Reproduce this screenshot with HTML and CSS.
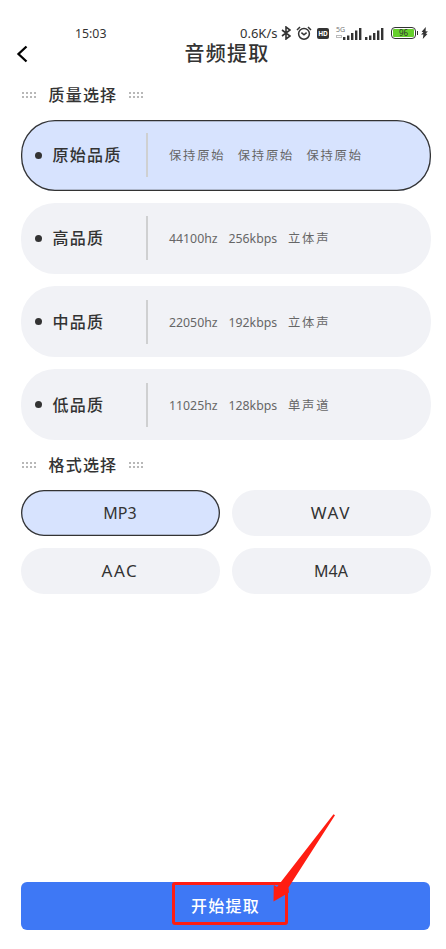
FILE: index.html
```
<!DOCTYPE html>
<html lang="zh-CN">
<head>
    <meta charset="UTF-8">
    <meta name="viewport" content="width=device-width, initial-scale=1.0">
    <title>音频提取</title>
    <link rel="stylesheet" href="styles.css">
</head>
<body>

    <div class="status-bar">
        <span class="time">15:03</span>
        <div class="status-right">
            <span class="speed">0.6K/s</span>
            <svg class="bluetooth" width="10" height="14" viewBox="0 0 10 14" fill="none" stroke="#333" stroke-width="1.6">
                <path d="M1 4 L9 10 L5 13 V1 L9 4 L1 10"/>
            </svg>
            <svg class="alarm" width="16" height="15" viewBox="0 0 16 15" fill="none" stroke="#333" stroke-width="1.5">
                <circle cx="8" cy="7.8" r="5.4"/>
                <path d="M1 4 L4 1 M15 4 L12 1 M5.4 6.6 L8 8.8 L10.6 6.6"/>
            </svg>
            <span class="hd">HD</span>
            <span class="network"><b>5G</b><i></i></span>
            <svg class="signal" width="19" height="13" viewBox="0 0 19 13" fill="#333">
                <path d="M0 10h2.4v3H0z M4 8.5h2.4V13H4z M8 6h2.4v7H8z M12 3.5h2.4V13H12z M16 1h2.4v12H16z"/>
            </svg>
            <svg class="signal second" width="19" height="13" viewBox="0 0 19 13" fill="#333">
                <path d="M0 10h2.4v3H0z M4 8.5h2.4V13H4z M8 6h2.4v7H8z M12 3.5h2.4V13H12z M16 1h2.4v12H16z"/>
            </svg>
            <span class="battery"><span class="level">96</span></span>
            <svg class="charge" width="7" height="12" viewBox="0 0 7 12" fill="#333">
                <path d="M4.8 0 L0.6 4.8 L2.4 5.2 L0 7.4 L2.4 7.6 L1.8 12 L6.4 7 L4.6 6.6 L7 4.4 L4.6 4.2z"/>
            </svg>
        </div>
    </div>

    <div class="header">
        <svg class="back" width="12" height="18" viewBox="0 0 12 18" fill="none" stroke="#000" stroke-width="2.3">
            <path d="M10.5 1.5 L2.5 9 L10.5 16.5"/>
        </svg>
        <h1>音频提取</h1>
    </div>

    <div class="content">
        <div class="section-title">
            <span class="dots"></span>
            <h2>质量选择</h2>
            <span class="dots"></span>
        </div>

        <div class="quality-list">
            <div class="quality active">
                <span class="name">原始品质</span>
                <div class="specs"><span class="cn">保持原始</span><span class="cn">保持原始</span><span class="cn">保持原始</span></div>
            </div>
            <div class="quality">
                <span class="name">高品质</span>
                <div class="specs"><span>44100hz</span><span>256kbps</span><span class="cn">立体声</span></div>
            </div>
            <div class="quality">
                <span class="name">中品质</span>
                <div class="specs"><span>22050hz</span><span>192kbps</span><span class="cn">立体声</span></div>
            </div>
            <div class="quality">
                <span class="name">低品质</span>
                <div class="specs"><span>11025hz</span><span>128kbps</span><span class="cn">单声道</span></div>
            </div>
        </div>

        <div class="section-title format-title">
            <span class="dots"></span>
            <h2>格式选择</h2>
            <span class="dots"></span>
        </div>

        <div class="format-list">
            <div class="format active">MP3</div>
            <div class="format wide">WAV</div>
            <div class="format wide">AAC</div>
            <div class="format">M4A</div>
        </div>
    </div>

    <div class="footer">
        <div class="start-btn">开始提取</div>
        <div class="highlight"></div>
        <svg class="arrow" width="64" height="90" viewBox="0 0 64 90" fill="#ff1d12">
            <path d="M62.5 1.2 L64 2.2 L17.5 74.5 L18 79.5 L2.5 88.5 L2.8 72 L6 74 Z"/>
        </svg>
    </div>

</body>
</html>
```

FILE: styles.css
```
* {
    margin: 0;
    padding: 0;
    box-sizing: border-box;
}

body {
    height: 949px;
    display: flex;
    flex-direction: column;
    background-color: #fff;
    color: #333;
    font-family: "Noto Sans", "Noto Sans CJK SC", sans-serif;
    overflow: hidden;
}

/* status bar */
.status-bar {
    height: 43px;
    padding: 23px 18px 0 75px;
    display: flex;
    justify-content: space-between;
    line-height: 20px;
    font-size: 13px;
}

.time {
    font-size: 12.3px;
    line-height: 21px;
}

.status-right {
    display: flex;
    align-items: center;
    height: 20px;
}

.speed {
    width: 40px;
    font-size: 13px;
    white-space: nowrap;
}

.bluetooth {
    margin-left: 1px;
}

.alarm {
    margin-left: 5px;
}

.hd {
    width: 12px;
    height: 11px;
    margin-left: 5px;
    border-radius: 2px;
    background-color: #333;
    color: #fff;
    font-size: 6.5px;
    font-weight: bold;
    line-height: 11px;
    text-align: center;
}

.network {
    width: 10px;
    height: 15px;
    margin-left: 7px;
    color: #777;
    line-height: 7px;
}

.network b {
    display: block;
    font-size: 7px;
    font-weight: normal;
}

.network i {
    display: block;
    width: 6px;
    height: 3px;
    margin-top: 2px;
    border: 1px solid #bbb;
}

.signal {
    margin-left: -3px;
}

.signal.second {
    margin-left: 3px;
}

.battery {
    position: relative;
    width: 25px;
    height: 12px;
    margin-left: 7px;
    padding: 1px;
    border: 1px solid #333;
    border-radius: 4px;
}

.battery::after {
    content: "";
    position: absolute;
    right: -3px;
    top: 3px;
    width: 1.5px;
    height: 4px;
    background-color: #333;
}

.level {
    display: block;
    height: 8px;
    border-radius: 1px;
    background-color: #65cf2b;
    font-size: 8px;
    line-height: 8px;
    text-align: center;
}

.charge {
    margin-left: 5px;
}

/* header */
.header {
    position: relative;
    height: 22px;
    display: flex;
    align-items: center;
    justify-content: center;
}

.back {
    position: absolute;
    left: 16px;
    top: 2px;
}

h1 {
    padding-left: 8px;
    font-size: 20px;
    font-weight: 500;
    line-height: 22px;
    letter-spacing: 1.3px;
}

.content {
    padding: 17.5px 16px 0 20.5px;
}

.section-title {
    height: 24px;
    display: flex;
    align-items: center;
}

h2 {
    width: 79px;
    margin-left: 12px;
    font-size: 16px;
    font-weight: 500;
    line-height: 24px;
    letter-spacing: 1.2px;
}

.dots {
    width: 16px;
    height: 8px;
    background-image: radial-gradient(circle, #b8b8b8 1px, transparent 1.5px);
    background-size: 4px 4px;
}

/* quality options */
.quality-list {
    margin-top: 13px;
    display: flex;
    flex-direction: column;
    gap: 12.3px;
}

.quality {
    height: 71px;
    width: 410px;
    display: flex;
    align-items: center;
    padding-left: 14px;
    border-radius: 34px;
    background-color: #f1f2f6;
}

.quality::before {
    content: "";
    width: 7px;
    height: 7px;
    border-radius: 50%;
    background-color: #333;
}

.active {
    background-color: #d7e3fe;
    box-shadow: inset 0 0 0 1.3px #333;
}

.name {
    width: 106.5px;
    height: 44px;
    padding-left: 11px;
    border-right: 2px solid #cfd0d1;
    font-size: 16px;
    font-weight: 500;
    line-height: 44px;
    letter-spacing: 1.3px;
}

.specs {
    display: flex;
    align-items: baseline;
    padding-left: 21px;
    color: #666;
    font-size: 12.3px;
}

.specs span {
    width: 59.5px;
    white-space: nowrap;
}

.specs .cn {
    letter-spacing: 1.8px;
}

.active .specs span {
    width: 68.7px;
}

/* format options */
.format-title {
    margin-top: 12.5px;
}

.format-list {
    width: 410px;
    margin-top: 13px;
    display: grid;
    grid-template-columns: 1fr 1fr;
    gap: 12px;
}

.format {
    height: 46px;
    border-radius: 23px;
    background-color: #f1f2f6;
    font-size: 16px;
    line-height: 46px;
    text-align: center;
}

.format.wide {
    font-size: 17px;
    letter-spacing: 1.6px;
}

.format.active {
    background-color: #d7e3fe;
}

/* bottom button */
.footer {
    position: relative;
    margin-top: auto;
    padding: 0 16px 19px 21px;
}

.start-btn {
    height: 48px;
    border-radius: 6px;
    background-color: #3e78f5;
    color: #fff;
    font-size: 16px;
    font-weight: 500;
    line-height: 48px;
    letter-spacing: 1.2px;
    text-align: center;
}

.highlight {
    position: absolute;
    left: 172px;
    top: 0;
    width: 116px;
    height: 43px;
    border: 3px solid #ff1d12;
    border-radius: 3px;
}

.arrow {
    position: absolute;
    left: 271px;
    top: -69px;
}
```
